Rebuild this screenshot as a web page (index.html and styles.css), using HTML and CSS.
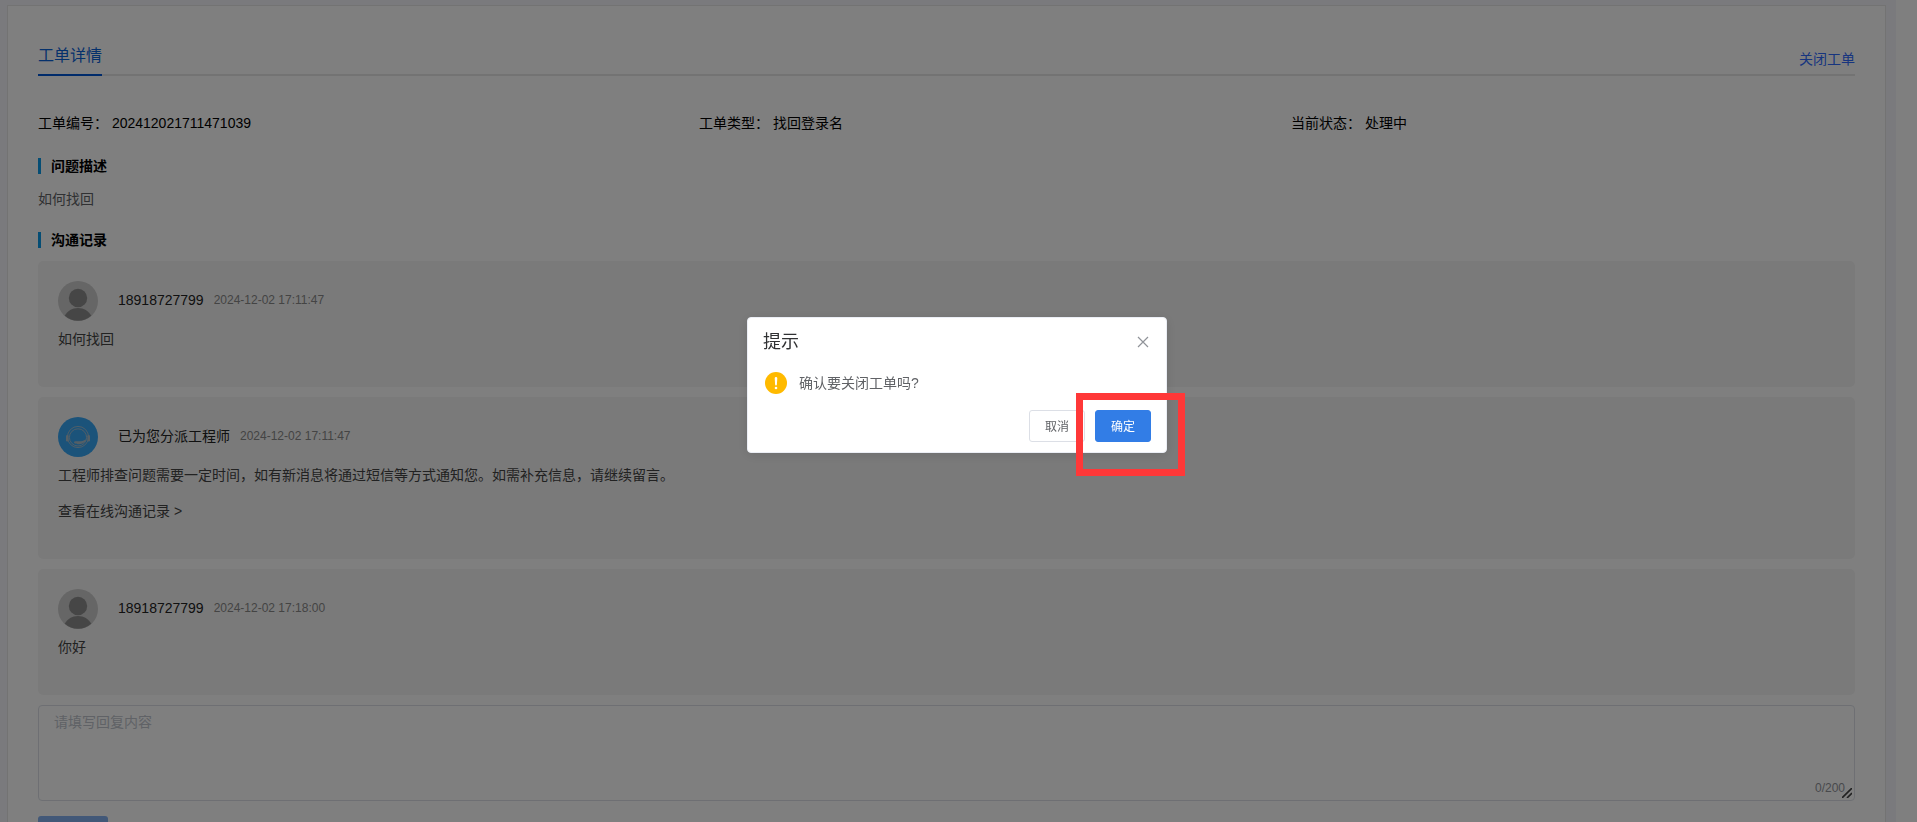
FILE: index.html
```html
<!DOCTYPE html>
<html lang="zh-CN">
<head>
  <meta charset="UTF-8" />
  <meta name="viewport" content="width=device-width, initial-scale=1.0" />
  <title>工单详情</title>
  <link rel="stylesheet" href="styles.css">
</head>
<body>
  <!-- Shared avatar shapes -->
  <svg class="sprite" aria-hidden="true">
    <symbol id="avatar-user" viewBox="0 0 40 40">
      <circle cx="20" cy="20" r="20" fill="#cccccc"/>
      <circle cx="20" cy="17" r="9.200" fill="#8c8c8c"/>
      <path d="M6.800 34.800C9.500 29.800 14 27 20 27s10.500 2.800 13.200 7.800A20 20 0 0 1 6.800 34.800z" fill="#8c8c8c"/>
    </symbol>
    <symbol id="avatar-agent" viewBox="0 0 40 40">
      <circle cx="20" cy="20" r="20" fill="#37a6f4"/>
      <g fill="none" stroke="#a9bfcd" stroke-width="0.9">
        <circle cx="20" cy="20" r="10.600"/>
        <circle cx="20" cy="20.400" r="8.600"/>
      </g>
      <g fill="#a9bfcd">
        <rect x="8" y="18" width="2.600" height="6.400" rx="1.200"/>
        <rect x="29.400" y="18" width="2.600" height="6.400" rx="1.200"/>
        <path d="M16.500 24.600c3-.8 5.500.4 9.200-1.200l2-1 .4.800c-1.800 2.700-4.100 3.900-7.600 4-3 .1-5.500-1.300-4-2.600z"/>
      </g>
    </symbol>
  </svg>

  <div class="page">
    <main class="panel">
      <header class="panel-header">
        <h1 class="tab">工单详情</h1>
        <a class="close-link" href="#">关闭工单</a>
      </header>

      <div class="info">
        <div class="info-item">工单编号： 202412021711471039</div>
        <div class="info-item">工单类型： 找回登录名</div>
        <div class="info-item">当前状态： 处理中</div>
      </div>

      <h2 class="section-title">问题描述</h2>
      <p class="question">如何找回</p>
      <h2 class="section-title">沟通记录</h2>

      <div class="records">
        <article class="record">
          <div class="record-head">
            <svg class="avatar" aria-hidden="true"><use href="#avatar-user"/></svg>
            <span class="name">18918727799</span>
            <time class="time">2024-12-02 17:11:47</time>
          </div>
          <p class="message">如何找回</p>
        </article>

        <article class="record">
          <div class="record-head">
            <svg class="avatar" aria-hidden="true"><use href="#avatar-agent"/></svg>
            <span class="name">已为您分派工程师</span>
            <time class="time">2024-12-02 17:11:47</time>
          </div>
          <p class="message">工程师排查问题需要一定时间，如有新消息将通过短信等方式通知您。如需补充信息，请继续留言。</p>
          <a class="message history-link" href="#">查看在线沟通记录 &gt;</a>
        </article>

        <article class="record">
          <div class="record-head">
            <svg class="avatar" aria-hidden="true"><use href="#avatar-user"/></svg>
            <span class="name">18918727799</span>
            <time class="time">2024-12-02 17:18:00</time>
          </div>
          <p class="message">你好</p>
        </article>
      </div>

      <form class="reply">
        <div class="reply-box">
          <textarea class="reply-input" aria-label="回复内容" placeholder="请填写回复内容" maxlength="200"></textarea>
          <span class="reply-count">0/200</span>
          <svg class="reply-grip" viewBox="0 0 10 10" fill="none" stroke="#444" stroke-width="1.6" aria-hidden="true"><path d="M0 10L10 0M5 10l5-5"/></svg>
        </div>
        <button class="reply-btn" type="button" aria-label="提交" disabled></button>
      </form>
    </main>
  </div>

  <!-- Confirm dialog -->
  <div class="overlay">
    <div class="dialog" role="dialog" aria-modal="true" aria-labelledby="dialog-title">
      <div class="dialog-header">
        <h2 class="dialog-title" id="dialog-title">提示</h2>
        <button class="dialog-close" type="button" aria-label="关闭">
          <svg width="16" height="16" viewBox="0 0 16 16" fill="none" stroke="#909399" stroke-width="1.2"><path d="M3 3l10 10M13 3L3 13"/></svg>
        </button>
      </div>
      <div class="dialog-body">
        <svg class="warn-icon" viewBox="0 0 22 22" aria-hidden="true">
          <circle cx="11" cy="11" r="11" fill="#ffba00"/>
          <path d="M9.700 6.200a1.300 1.300 0 0 1 2.600 0l-.4 6.300a.9.900 0 0 1-1.800 0z" fill="#fff"/>
          <circle cx="11" cy="16" r="1.300" fill="#fff"/>
        </svg>
        <p class="dialog-text">确认要关闭工单吗?</p>
      </div>
      <div class="dialog-footer">
        <button class="btn" type="button">取消</button>
        <div class="confirm">
          <button class="btn btn-primary" type="button">确定</button>
          <span class="highlight"></span>
        </div>
      </div>
    </div>
  </div>
</body>
</html>
```
FILE: styles.css
```css
* {
  box-sizing: border-box;
}
body {
  margin: 0;
  min-height: 100vh;
  padding-right: 21px;
  background: #fff;
  font-family: "Liberation Sans", "Noto Sans CJK SC", sans-serif;
  font-size: 14px;
  line-height: 20px;
  color: #000;
  overflow: hidden;
}
h1, h2, p {
  margin: 0;
}
a {
  text-decoration: none;
}
button, textarea {
  font-family: inherit;
}
.sprite {
  position: absolute;
  width: 0;
  height: 0;
}
.page {
  min-height: 100vh;
  padding: 5px 10px 10px 7px;
  background: #f5f5fa;
}
.panel {
  padding: 34px 30px 30px;
  background: #fff;
  border: 1px solid #e6e6e6;
}

/* Header */
.panel-header {
  display: flex;
  justify-content: space-between;
  align-items: flex-end;
  height: 36px;
  border-bottom: 2px solid #e6e6e6;
}
.tab {
  height: 36px;
  margin-bottom: -2px;
  border-bottom: 2px solid #0056d6;
  font-size: 16px;
  font-weight: 400;
  line-height: 32px;
  color: #0a62d8;
}
.close-link {
  margin-bottom: 5px;
  color: #2f6bff;
}

/* Ticket info */
.info {
  display: flex;
  margin: 37px 0 25px;
}
.info-item {
  flex: 1 1 auto;
}
.section-title {
  padding-left: 10px;
  border-left: 3px solid #0a9ae8;
  font-size: 14px;
  line-height: 16px;
}
.question {
  margin: 15px 0 23px;
  color: #606266;
}

/* Records */
.records {
  display: flex;
  flex-direction: column;
  gap: 10px;
  margin: 13px 0 10px;
}
.record {
  padding: 20px 20px 38px;
  background: #f5f5f5;
  border-radius: 5px;
}
.record-head {
  display: flex;
  align-items: flex-start;
  height: 40px;
  margin-bottom: 8px;
  line-height: 38px;
}
.avatar {
  width: 40px;
  height: 40px;
  margin-right: 20px;
}
.name {
  margin-right: 10px;
  color: #222;
}
.time {
  font-size: 12px;
  color: #888;
}
.message {
  color: #444;
}
.history-link {
  display: block;
  margin-top: 16px;
}

/* Reply */
.reply-box {
  position: relative;
}
.reply-input {
  display: block;
  width: 100%;
  height: 96px;
  padding: 6px 15px;
  border: 1px solid #dcdfe6;
  border-radius: 4px;
  background: #fff;
  font-size: 14px;
  line-height: 21px;
  color: #606266;
  resize: vertical;
}
.reply-input::-webkit-resizer {
  background: transparent;
}
.reply-input::placeholder {
  color: #c0c4cc;
}
.reply-count {
  position: absolute;
  right: 10px;
  bottom: 3px;
  font-size: 12px;
  color: #909399;
  pointer-events: none;
}
.reply-grip {
  position: absolute;
  right: 3px;
  bottom: 3px;
  width: 10px;
  height: 10px;
  pointer-events: none;
}
.reply-btn {
  display: block;
  width: 70px;
  height: 32px;
  margin-top: 15px;
  border: 0;
  border-radius: 3px;
  background: #84b1f0;
}

/* Dialog */
.overlay {
  position: fixed;
  inset: 0;
  display: flex;
  align-items: center;
  justify-content: center;
  padding: 0 3px 52px 0;
  background: rgba(0, 0, 0, 0.5);
}
.dialog {
  width: 420px;
  border: 1px solid #ebeef5;
  border-radius: 4px;
  background: #fff;
  box-shadow: 0 2px 12px rgba(0, 0, 0, 0.1);
}
.dialog-header {
  display: flex;
  justify-content: space-between;
  align-items: center;
  padding: 14px 15px 10px;
}
.dialog-title {
  font-size: 18px;
  font-weight: 400;
  line-height: 20px;
  color: #303133;
}
.dialog-close {
  display: flex;
  padding: 0;
  border: 0;
  background: none;
  cursor: pointer;
}
.dialog-body {
  display: flex;
  align-items: center;
  gap: 12px;
  padding: 10px 17px;
}
.warn-icon {
  width: 22px;
  height: 22px;
}
.dialog-text {
  color: #606266;
}
.dialog-footer {
  display: flex;
  justify-content: flex-end;
  gap: 10px;
  padding: 6px 15px 10px;
}
.btn {
  display: block;
  width: 56px;
  height: 32px;
  padding: 1px 0 0;
  border: 1px solid #dcdfe6;
  border-radius: 3px;
  background: #fff;
  font-size: 12px;
  line-height: 20px;
  color: #606266;
  cursor: pointer;
}
.btn-primary {
  border-color: #327de6;
  background: #327de6;
  color: #fff;
}
.confirm {
  position: relative;
}
.highlight {
  position: absolute;
  inset: -17px -34px -34px -19px;
  border: 7px solid #ff3838;
  pointer-events: none;
}
```
